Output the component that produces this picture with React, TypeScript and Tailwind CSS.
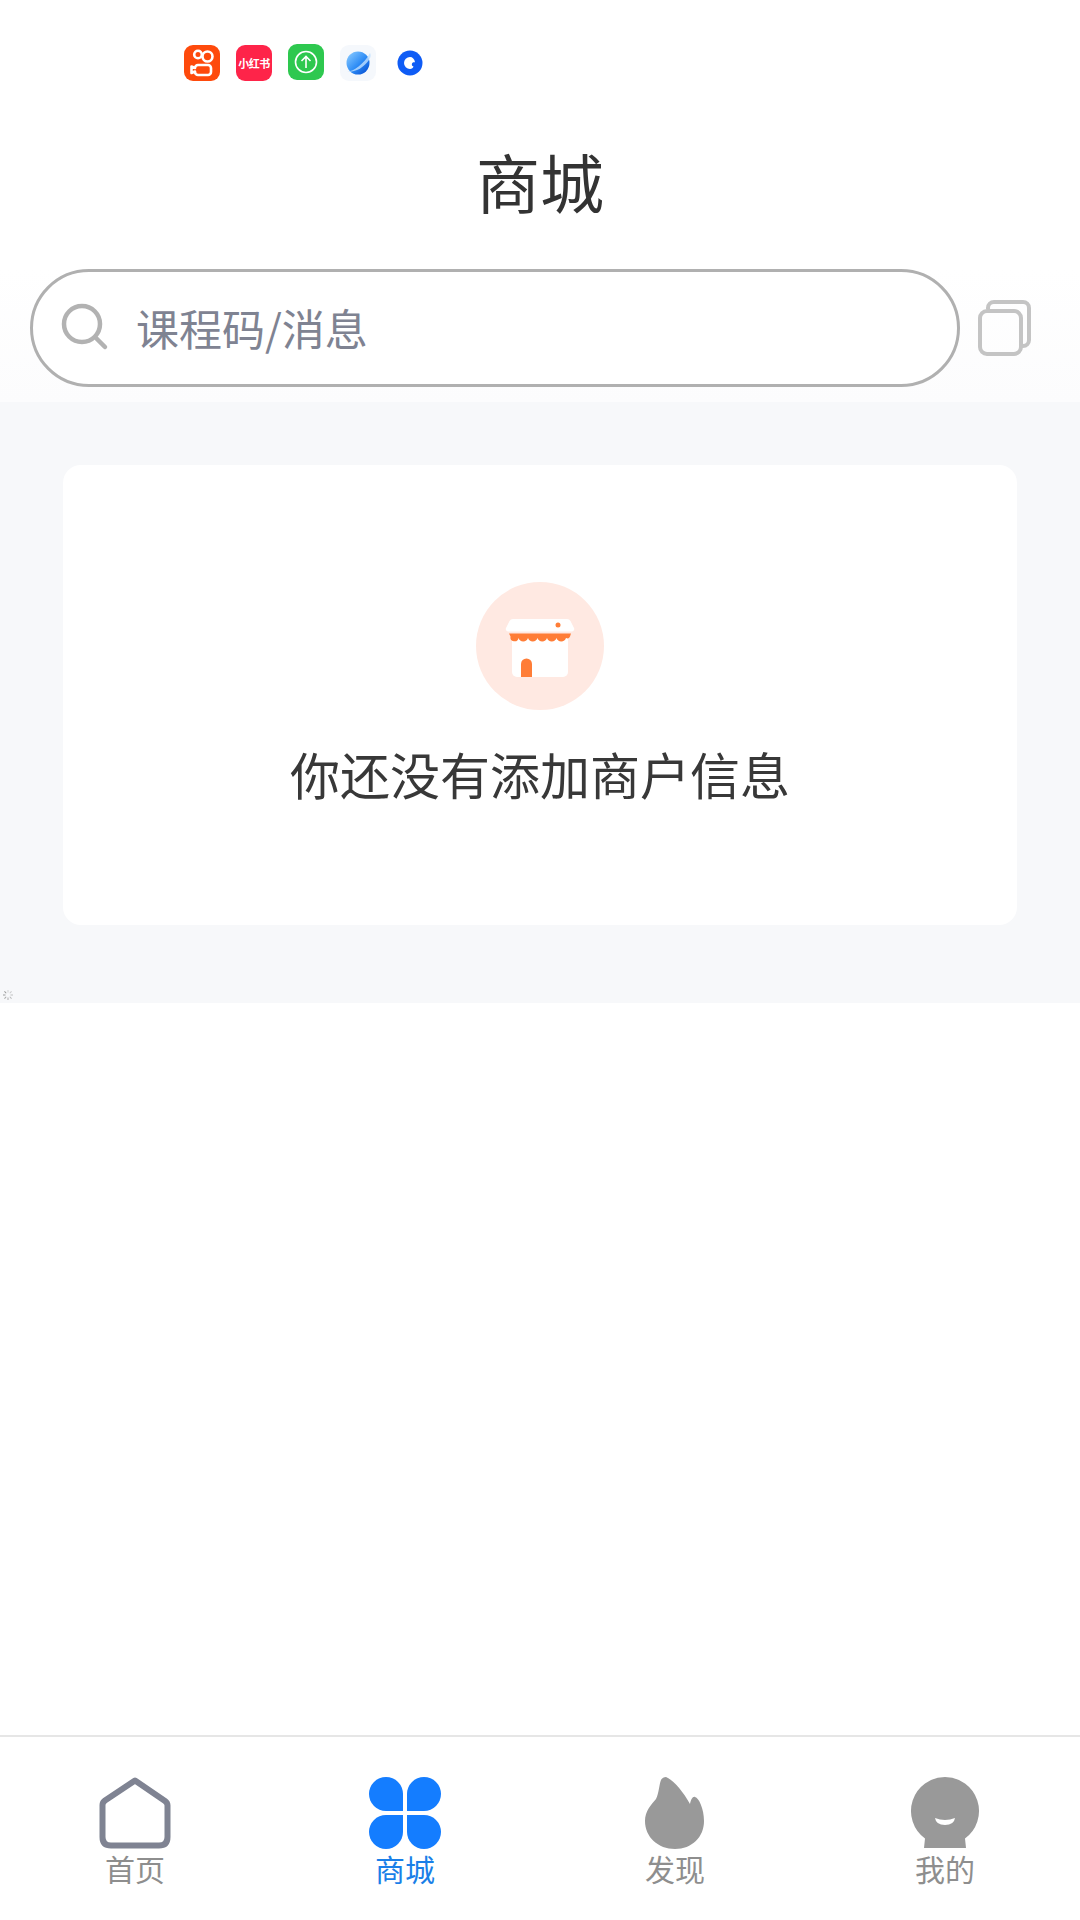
const FONT = "font-['Noto_Sans_CJK_SC','Noto_Sans',sans-serif]"

function AppBadges() {
  return (
    <div className="flex h-[100px] items-start gap-[16px] pl-[184px] pt-[45px]">
      <svg width="36" height="36" viewBox="0 0 36 36">
        <rect width="36" height="36" rx="9" fill="#fe4a0c" />
        <circle cx="14" cy="9.500" r="3.800" fill="none" stroke="#fff" strokeWidth="2.600" />
        <circle cx="23.500" cy="11.500" r="5" fill="none" stroke="#fff" strokeWidth="2.600" />
        <path d="M14 20h10a3 3 0 0 1 3 3v4a3 3 0 0 1-3 3H14a3 3 0 0 1-3-3v-.5L7.500 28v-6.500L11 23a3 3 0 0 1 3-3z" fill="none" stroke="#fff" strokeWidth="2.600" strokeLinejoin="round" />
      </svg>
      <div className="flex h-[36px] w-[36px] items-center justify-center rounded-[9px] bg-[#fe2449] text-[11px] font-bold tracking-[-0.5px] text-white">
        小红书
      </div>
      <svg width="36" height="36" viewBox="0 0 36 36" className="-mt-[1px]">
        <rect width="36" height="36" rx="9" fill="#2ec84f" />
        <circle cx="18" cy="18" r="10.500" fill="none" stroke="#fff" strokeWidth="1.600" />
        <path d="M18 24V12.500M13.500 17l4.500-4.500 4.500 4.500" fill="none" stroke="#fff" strokeWidth="1.600" />
      </svg>
      <svg width="36" height="36" viewBox="0 0 36 36">
        <defs>
          <linearGradient id="planet" x1="0.1" y1="0.1" x2="0.9" y2="0.9">
            <stop offset="0" stopColor="#7fc4ff" />
            <stop offset="0.55" stopColor="#2e8cf5" />
            <stop offset="1" stopColor="#0a55d6" />
          </linearGradient>
        </defs>
        <rect width="36" height="36" rx="9" fill="#f5f8fc" />
        <circle cx="18" cy="18" r="11.500" fill="url(#planet)" />
        <path d="M7 27C14 26 24 19 30 8c1.500 3 0 5-1 7C24 22 17 27 7 27z" fill="#bfe0ff" opacity="0.8" />
      </svg>
      <svg width="36" height="36" viewBox="0 0 36 36">
        <circle cx="18" cy="18" r="12.500" fill="#0f5cf5" />
        <path d="M18 12a6 6 0 1 0 0 12c2 0 3-1 3.500-2.500-1.500-.5-2-1.500-1.500-3 .5-1 1.500-1.500 3-1.200C22.500 14 20.500 12 18 12z" fill="#fff" />
      </svg>
    </div>
  )
}

function SearchRow() {
  return (
    <div className="flex items-start bg-gradient-to-b from-white to-[#fcfcfd] pb-[15px] pl-[30px]">
      <div className="flex h-[118px] w-[930px] items-center rounded-[59px] border-[3px] border-[#b0b0b0] bg-white pl-[27px]">
        <svg width="50" height="50" viewBox="0 0 50 50" className="shrink-0">
          <circle cx="22" cy="21" r="18" fill="none" stroke="#b2b2b2" strokeWidth="4.500" />
          <path d="M36 35l9 9" stroke="#b2b2b2" strokeWidth="4.500" strokeLinecap="round" />
        </svg>
        <span className="mb-[2px] ml-[26px] text-[43px] leading-none text-[#7f8392]">课程码/消息</span>
      </div>
      <svg width="54" height="56" viewBox="0 0 54 56" className="ml-[18px] mt-[31px]">
        <path d="M10 9V8a6 6 0 0 1 6-6h29a6 6 0 0 1 6 6v32a6 6 0 0 1-6 6h-2" fill="none" stroke="#c4c4c4" strokeWidth="4" />
        <rect x="2" y="11" width="41" height="43" rx="7" fill="none" stroke="#c4c4c4" strokeWidth="4" />
      </svg>
    </div>
  )
}

function ShopIcon() {
  return (
    <svg width="128" height="128" viewBox="0 0 128 128">
      <circle cx="64" cy="64" r="64" fill="#ffe9e2" />
      <path d="M36 52h56v38a5 5 0 0 1-5 5H41a5 5 0 0 1-5-5z" fill="#fff" />
      <path d="M37 37h54a4 4 0 0 1 3.500 2L98 46a2.500 2.500 0 0 1-2.500 3.500h-63A2.500 2.500 0 0 1 30 46l3.500-7A4 4 0 0 1 37 37z" fill="#fff" />
      <path d="M33 51.500h62l-1 3a3 3 0 0 1-4 1.500a5 5 0 0 1-9.500 0a5 5 0 0 1-9.500 0a5 5 0 0 1-9.500 0a5 5 0 0 1-9.500 0a5 5 0 0 1-9.500 0a3 3 0 0 1-8-1.500z" fill="#ff7d37" />
      <path d="M45 95V82a5.500 5.500 0 0 1 11 0v13z" fill="#ff7d37" />
      <circle cx="82" cy="43" r="2.500" fill="#ff7d37" />
    </svg>
  )
}

function Spinner() {
  const spokes = [0, 45, 90, 135, 180, 225, 270, 315]
  return (
    <svg width="10" height="10" viewBox="0 0 10 10" className="absolute bottom-[3px] left-[3px]">
      {spokes.map((a, i) => (
        <rect key={a} x="4.500" y="0" width="1" height="2.500" fill="#8a8a8a" opacity={0.35 + i * 0.08} transform={`rotate(${a} 5 5)`} />
      ))}
    </svg>
  )
}

const HomeIcon = () => (
  <svg width="72" height="72" viewBox="0 0 72 72">
    <path d="M36 3.500L66 24q2.500 1.800 2.500 4.500V60q0 8.500-8.500 8.500H12q-8.500 0-8.500-8.500V28q0-2.700 2.500-4.500z" fill="none" stroke="#7f8392" strokeWidth="6" strokeLinejoin="round" />
  </svg>
)

const CloverIcon = () => (
  <svg width="72" height="72" viewBox="0 0 72 72" fill="#147dff">
    <path d="M34 34H17A17 17 0 1 1 34 17z" />
    <path d="M38 34V17A17 17 0 1 1 55 34z" />
    <path d="M34 38V55A17 17 0 1 1 17 38z" />
    <path d="M38 38H55A17 17 0 1 1 38 55z" />
  </svg>
)

const FlameIcon = () => (
  <svg width="72" height="72" viewBox="0 0 72 72" fill="#999">
    <path d="M27 0C34 3 44 14 51 27C52 22 54 19 56 20C60 21 65 32 65 44C65 60 53 72 36 72C19 72 6 60 6 44C6 34 12 28 17 22C20 16 20 8 22 3C23 1 25 0 27 0z" />
  </svg>
)

const HeadIcon = () => (
  <svg width="72" height="72" viewBox="0 0 72 72">
    <path d="M36 0A34 34 0 0 1 56 61.500L57 71H15L16 61.500A34 34 0 0 1 36 0z" fill="#999" />
    <path d="M26 41Q36 45 46 41Q45 48 36 48Q27 48 26 41z" fill="#fff" />
  </svg>
)

const TABS = [
  { label: '首页', icon: <HomeIcon />, active: false },
  { label: '商城', icon: <CloverIcon />, active: true },
  { label: '发现', icon: <FlameIcon />, active: false },
  { label: '我的', icon: <HeadIcon />, active: false },
]

export default function App() {
  return (
    <div className={`flex min-h-[1920px] w-[1080px] flex-col bg-white ${FONT}`}>
      <AppBadges />
      <h1 className="flex h-[169px] items-center justify-center pb-[10px] text-[64px] font-normal text-[#333]">商城</h1>
      <SearchRow />

      <main className="relative h-[601px] bg-[#f7f8fa] px-[63px] pt-[63px]">
        <div className="flex h-[460px] flex-col items-center rounded-[18px] bg-white pt-[117px]">
          <ShopIcon />
          <p className="mt-[28px] text-[50px] leading-[70px] text-[#383838]">你还没有添加商户信息</p>
        </div>
        <Spinner />
      </main>

      <div className="flex-1" />

      <nav className="grid h-[185px] grid-cols-4 border-t-2 border-[#e6e6e6] pt-[40px]">
        {TABS.map((t) => (
          <div key={t.label} className="flex flex-col items-center">
            {t.icon}
            <span className={`mt-[1px] text-[30px] leading-[36px] ${t.active ? 'text-[#1a7fe8]' : 'text-[#8e8e8e]'}`}>
              {t.label}
            </span>
          </div>
        ))}
      </nav>
    </div>
  )
}
